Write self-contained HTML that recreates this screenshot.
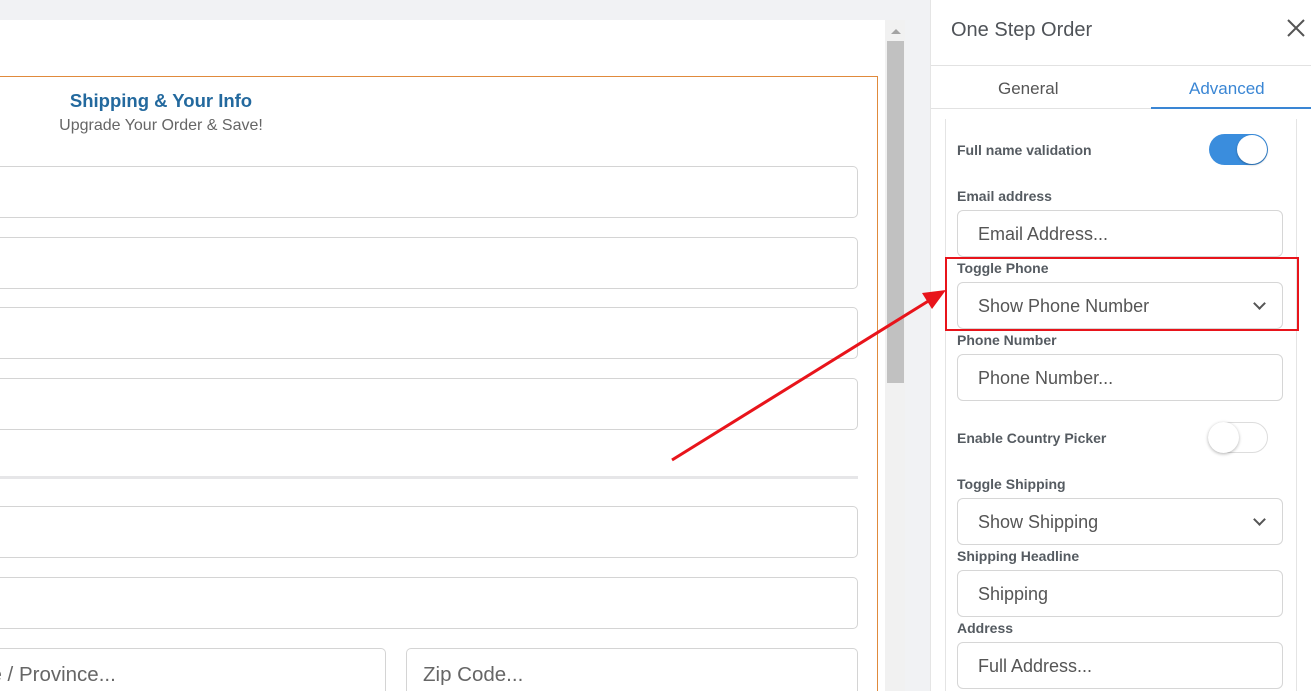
<!DOCTYPE html>
<html><head><style>
*{box-sizing:border-box;margin:0;padding:0}
html,body{width:1311px;height:691px;overflow:hidden}
body{background:#f1f2f4;position:relative;font-family:"Liberation Sans",sans-serif}
.a{position:absolute}
.inp{position:absolute;border:1px solid #d4d4d4;border-radius:5px;background:#fff}
.lbl{position:absolute;left:957px;font-size:14px;color:#555b61;font-weight:bold}
.pin{position:absolute;left:957px;width:326px;height:47px;border:1px solid #d6d6d6;border-radius:6px;background:#fff;font-size:18px;color:#555;padding-left:20px;line-height:47px}
.chev{position:absolute;right:18px;top:16px;width:9px;height:9px;border-right:2px solid #555;border-bottom:2px solid #555;transform:rotate(45deg)}
</style></head><body>
<div class="a" style="left:0;top:20px;width:885px;height:671px;background:#fff;overflow:hidden">
<div class="a" style="left:0;top:56px;width:878px;height:615px;border:1px solid #e08a3c;border-left:none;border-bottom:none"></div>
<div class="a" style="left:0;top:70px;width:322px;text-align:center;font-size:18.5px;font-weight:bold;color:#23699e">Shipping &amp; Your Info</div>
<div class="a" style="left:0;top:97px;width:322px;text-align:center;font-size:16px;color:#666">Upgrade Your Order &amp; Save!</div>
<div class="inp" style="left:0;top:146px;width:858px;height:52px;border-left:none;border-radius:0 5px 5px 0"></div>
<div class="inp" style="left:0;top:217px;width:858px;height:52px;border-left:none;border-radius:0 5px 5px 0"></div>
<div class="inp" style="left:0;top:287px;width:858px;height:52px;border-left:none;border-radius:0 5px 5px 0"></div>
<div class="inp" style="left:0;top:358px;width:858px;height:52px;border-left:none;border-radius:0 5px 5px 0"></div>
<div class="a" style="left:0;top:456px;width:858px;height:3px;background:#e6e6e8"></div>
<div class="inp" style="left:0;top:486px;width:858px;height:52px;border-left:none;border-radius:0 5px 5px 0"></div>
<div class="inp" style="left:0;top:557px;width:858px;height:52px;border-left:none;border-radius:0 5px 5px 0"></div>
<div class="inp" style="left:0;top:628px;width:386px;height:43px;border-left:none;border-bottom:none;border-radius:0 5px 0 0;overflow:hidden"><span class="a" style="left:-46px;top:14px;font-size:20.5px;color:#666;white-space:nowrap">State / Province...</span></div>
<div class="inp" style="left:406px;top:628px;width:452px;height:43px;border-bottom:none;border-radius:5px 5px 0 0"><span class="a" style="left:16px;top:14px;font-size:20.5px;color:#666">Zip Code...</span></div>
</div>
<div class="a" style="left:885px;top:20px;width:20px;height:671px;background:#f1f1f1"></div>
<div class="a" style="left:887px;top:41px;width:17px;height:342px;background:#c1c1c1"></div>
<div class="a" style="left:891px;top:29px;width:0;height:0;border-left:5px solid transparent;border-right:5px solid transparent;border-bottom:5px solid #a3a3a3"></div>
<div class="a" style="left:930px;top:0;width:381px;height:691px;background:#fff;border-left:1px solid #e5e5e5"></div>
<div class="a" style="left:951px;top:19px;font-size:20px;color:#4f5358">One Step Order</div>
<svg class="a" style="left:1287px;top:19px" width="18" height="18"><path d="M1 1L17 17M17 1L1 17" stroke="#555" stroke-width="2"/></svg>
<div class="a" style="left:931px;top:65px;width:380px;height:1px;background:#e2e2e2"></div>
<div class="a" style="left:998px;top:79px;font-size:17px;color:#555">General</div>
<div class="a" style="left:1189px;top:79px;font-size:17px;color:#3a86d4">Advanced</div>
<div class="a" style="left:931px;top:108px;width:380px;height:1px;background:#e2e2e2"></div>
<div class="a" style="left:1151px;top:107px;width:160px;height:2px;background:#3a86d4"></div>
<div class="a" style="left:945px;top:119px;width:1px;height:572px;background:#e4e4e4"></div>
<div class="a" style="left:1296px;top:119px;width:1px;height:572px;background:#e4e4e4"></div>
<div class="lbl" style="top:142px">Full name validation</div>
<div class="a" style="left:1209px;top:134px;width:59px;height:31px;border-radius:16px;background:#3a8ddd"></div>
<div class="a" style="left:1237px;top:135px;width:30px;height:29px;border-radius:50%;background:#fff;box-shadow:0 1px 2px rgba(0,0,0,.3)"></div>
<div class="lbl" style="top:188px">Email address</div>
<div class="pin" style="top:210px">Email Address...</div>
<div class="lbl" style="top:260px">Toggle Phone</div>
<div class="pin" style="top:282px">Show Phone Number<span class="chev"></span></div>
<div class="lbl" style="top:332px">Phone Number</div>
<div class="pin" style="top:354px">Phone Number...</div>
<div class="lbl" style="top:430px">Enable Country Picker</div>
<div class="a" style="left:1208px;top:422px;width:60px;height:31px;border-radius:16px;background:#fff;border:1px solid #ddd"></div>
<div class="a" style="left:1208px;top:422px;width:31px;height:31px;border-radius:50%;background:#fff;box-shadow:0 1px 3px rgba(0,0,0,.3)"></div>
<div class="lbl" style="top:476px">Toggle Shipping</div>
<div class="pin" style="top:498px">Show Shipping<span class="chev"></span></div>
<div class="lbl" style="top:548px">Shipping Headline</div>
<div class="pin" style="top:570px">Shipping</div>
<div class="lbl" style="top:620px">Address</div>
<div class="pin" style="top:642px">Full Address...</div>
<div class="a" style="left:945px;top:257px;width:354px;height:74px;border:2px solid #e8141b"></div>
<svg class="a" style="left:0;top:0" width="1311" height="691"><line x1="672" y1="460" x2="930" y2="300" stroke="#e8141b" stroke-width="3"/><polygon points="946,290 922,293 932,309" fill="#e8141b"/></svg>
</body></html>
